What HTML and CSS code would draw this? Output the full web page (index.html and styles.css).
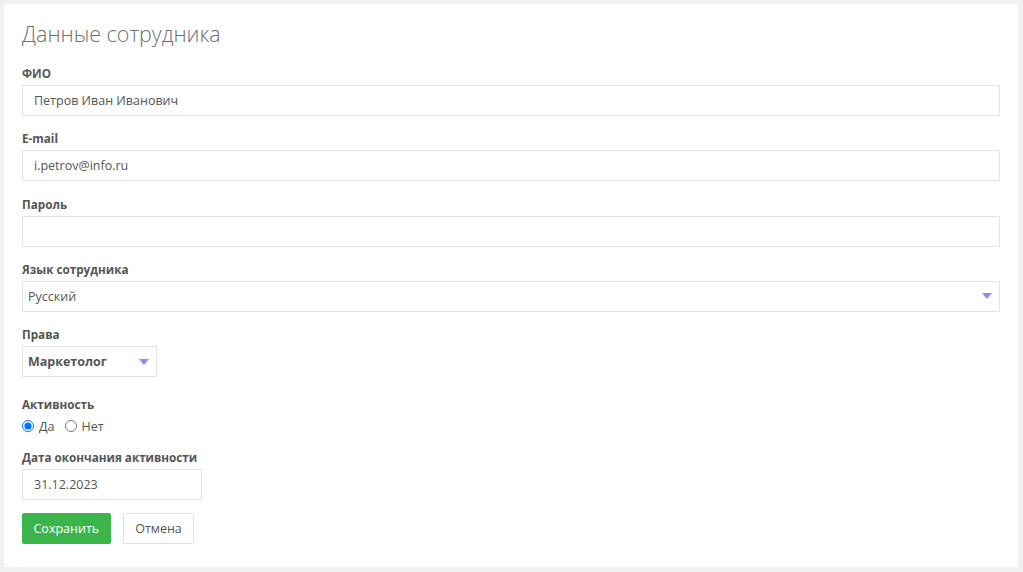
FILE: index.html
```html
<!DOCTYPE html>
<html lang="ru">
<head>
<meta charset="utf-8">
<title>Данные сотрудника</title>
<link rel="stylesheet" href="styles.css">
</head>
<body>
<div class="card">
  <h1 class="title">Данные сотрудника</h1>

  <div class="field">
    <label class="label">ФИО</label>
    <div class="input">Петров Иван Иванович</div>
  </div>

  <div class="field">
    <label class="label">E-mail</label>
    <div class="input">i.petrov@info.ru</div>
  </div>

  <div class="field">
    <label class="label">Пароль</label>
    <div class="input"></div>
  </div>

  <div class="field">
    <label class="label">Язык сотрудника</label>
    <div class="select select-wide">
      <span>Русский</span>
      <svg class="arrow" width="10" height="6" viewBox="0 0 10 6"><path d="M0 0H10L5 6Z" fill="#8b8bf3"/></svg>
    </div>
  </div>

  <div class="field field-rights">
    <label class="label">Права</label>
    <div class="select select-small">
      <span>Маркетолог</span>
      <svg class="arrow" width="10" height="6" viewBox="0 0 10 6"><path d="M0 0H10L5 6Z" fill="#8b8bf3"/></svg>
    </div>
  </div>

  <div class="field field-activity">
    <label class="label">Активность</label>
    <div class="radios">
      <label class="radio"><input type="radio" name="active" checked> Да</label>
      <label class="radio"><input type="radio" name="active"> Нет</label>
    </div>
  </div>

  <div class="field field-date">
    <label class="label">Дата окончания активности</label>
    <div class="input input-date">31.12.2023</div>
  </div>

  <div class="actions">
    <button class="btn btn-save">Сохранить</button>
    <button class="btn btn-cancel">Отмена</button>
  </div>
</div>
</body>
</html>
```

FILE: styles.css
```css
html, body {
  margin: 0;
  padding: 0;
}

body {
  background: #f1f1f1;
  font-family: "Open Sans", "Liberation Sans", sans-serif;
  color: #555;
  padding: 4px 5px 5px 4px;
}

.card {
  background: #fff;
  padding: 14px 18px 23px 18px;
  box-sizing: border-box;
  min-height: 563px;
}

.title {
  margin: 0 0 15px 0;
  font-size: 21.5px;
  line-height: 32px;
  font-weight: 300;
  color: #6f6f6f;
}

.field {
  margin-bottom: 14.33px;
}

.label {
  display: block;
  font-size: 11.7px;
  line-height: 16px;
  font-weight: 700;
  color: #555;
  margin-bottom: 4px;
}

.input {
  box-sizing: border-box;
  height: 31px;
  border: 1px solid #e3e3e3;
  padding: 0 11px;
  font-size: 12.5px;
  line-height: 29px;
  color: #555;
}

.input-date {
  width: 180px;
}

.select {
  box-sizing: border-box;
  height: 31px;
  border: 1px solid #e3e3e3;
  display: flex;
  align-items: center;
  justify-content: space-between;
  padding: 0 7px 0 5px;
  font-size: 12.5px;
  color: #555;
}

.select-small {
  width: 135px;
  font-weight: 700;
}

.arrow {
  display: block;
}

.field-rights {
  margin-bottom: 19px;
}

.radios {
  display: flex;
  align-items: center;
  height: 20px;
  gap: 10px;
  margin-top: 1px;
}

.radio {
  display: flex;
  align-items: center;
  font-size: 12.5px;
  color: #555;
}

.radio input {
  margin: 0 5px 0 0;
  width: 12px;
  height: 12px;
}

.field-activity {
  margin-bottom: 13px;
}

.field-date {
  margin-bottom: 13px;
}

.actions {
  display: flex;
  gap: 12px;
}

.btn {
  box-sizing: border-box;
  height: 31px;
  font-family: "Open Sans", "Liberation Sans", sans-serif;
  font-size: 12.5px;
  border-radius: 2px;
  cursor: pointer;
}

.btn-save {
  background: #3bb54a;
  border: 1px solid #3bb54a;
  color: #fff;
  padding: 0 10.5px;
}

.btn-cancel {
  background: #fff;
  border: 1px solid #e0e0e0;
  color: #555;
  padding: 0 11.5px;
}
```
